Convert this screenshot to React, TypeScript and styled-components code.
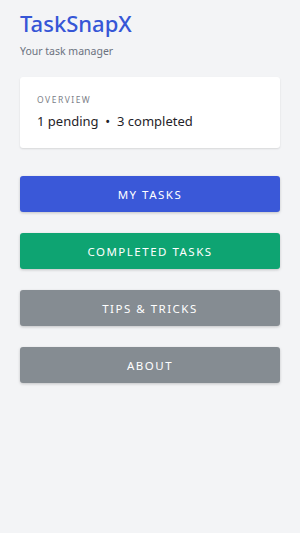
import React from 'react';
import styled, { createGlobalStyle } from 'styled-components';

const GlobalStyle = createGlobalStyle`
  html, body {
    margin: 0;
    padding: 0;
    background: #f3f4f6;
    font-family: "Noto Sans", "DejaVu Sans", sans-serif;
  }
`;

const Page = styled.div`
  min-height: 533px;
  padding: 8px 20px 20px;
  box-sizing: border-box;
`;

const Title = styled.h1`
  margin: 0;
  font-size: 22px;
  font-weight: 500;
  color: #3656d6;
  line-height: 30px;
`;

const Subtitle = styled.div`
  margin-top: 6px;
  font-size: 10.5px;
  color: #6b7280;
`;

const Card = styled.div`
  margin-top: 19px;
  background: #ffffff;
  border-radius: 3px;
  box-shadow: 0 1px 2px rgba(0, 0, 0, 0.12);
  padding: 17px 17px 18px;
`;

const CardLabel = styled.div`
  font-size: 8.5px;
  letter-spacing: 1.5px;
  color: #7c8088;
  text-transform: uppercase;
`;

const CardValue = styled.div`
  margin-top: 7px;
  font-size: 13px;
  color: #1f2329;
`;

const Menu = styled.div`
  margin-top: 28px;
  display: flex;
  flex-direction: column;
  gap: 21px;
`;

const MenuButton = styled.button<{ $bg: string }>`
  height: 36px;
  border: none;
  border-radius: 3px;
  background: ${p => p.$bg};
  color: #ffffff;
  font-family: inherit;
  font-size: 11.5px;
  letter-spacing: 1.5px;
  text-transform: uppercase;
  box-shadow: 0 1px 3px rgba(0, 0, 0, 0.2);
  cursor: pointer;
`;

const items = [
  { label: 'My Tasks', bg: '#3a58d8' },
  { label: 'Completed Tasks', bg: '#0ea472' },
  { label: 'Tips & Tricks', bg: '#858c92' },
  { label: 'About', bg: '#858c92' },
];

export default function App() {
  return (
    <>
      <GlobalStyle />
      <Page>
        <Title>TaskSnapX</Title>
        <Subtitle>Your task manager</Subtitle>
        <Card>
          <CardLabel>Overview</CardLabel>
          <CardValue>1 pending &nbsp;•&nbsp; 3 completed</CardValue>
        </Card>
        <Menu>
          {items.map(item => (
            <MenuButton key={item.label} $bg={item.bg}>
              {item.label}
            </MenuButton>
          ))}
        </Menu>
      </Page>
    </>
  );
}
